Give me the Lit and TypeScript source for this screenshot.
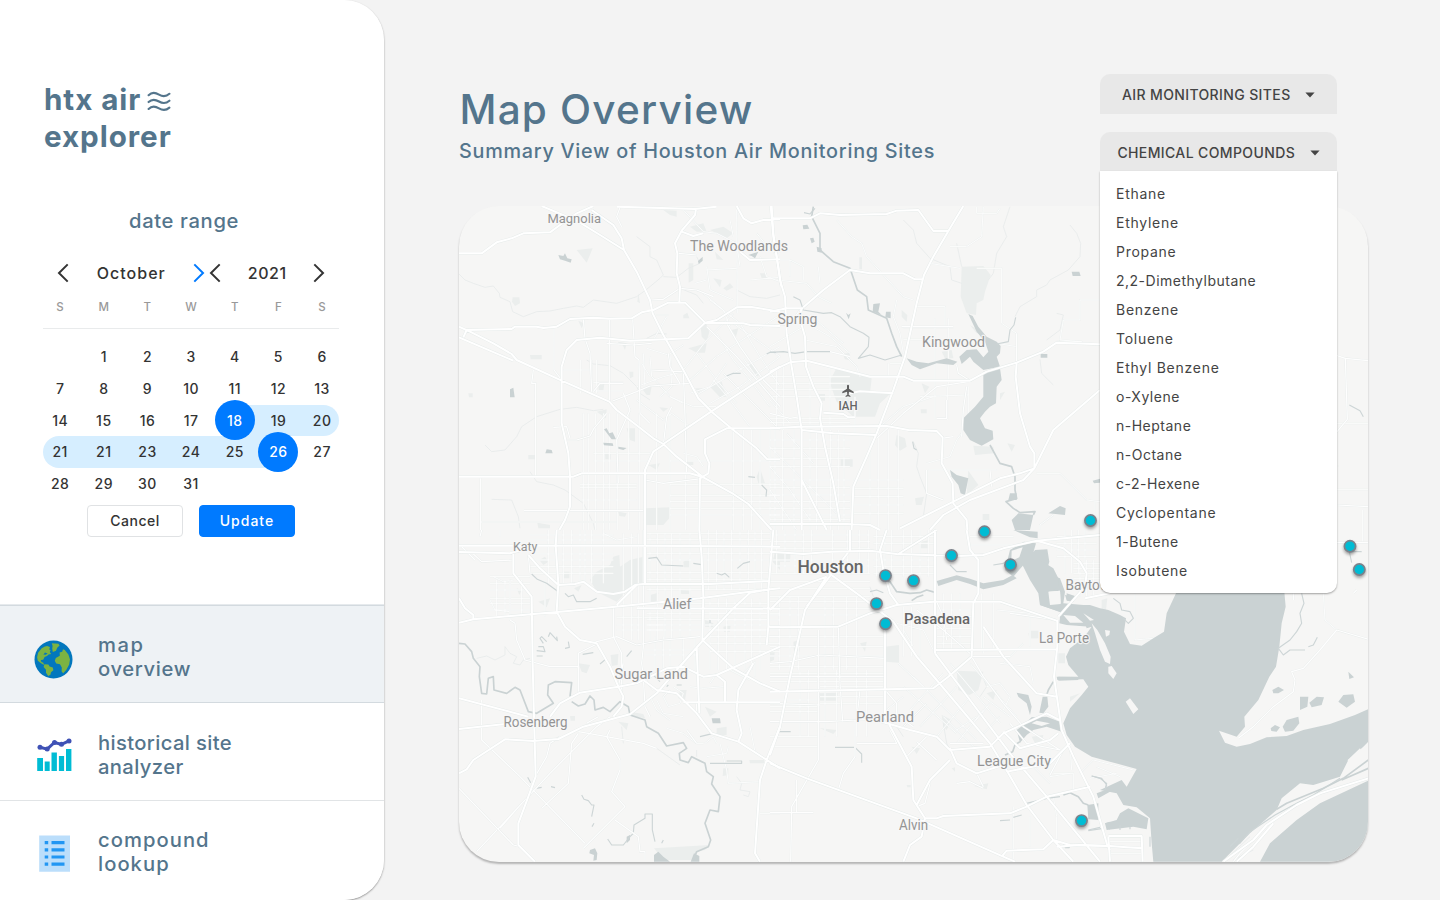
import { LitElement, html, svg, css } from "lit";
import { customElement } from "lit/decorators.js";
import { classMap } from "lit/directives/class-map.js";

/* ---------- map data: survey tiles, drawn at 3 units per pixel ---------- */

interface Tile {
  x: number;
  y: number;
  water?: string;
  land?: string;
  parks?: string;
  streams?: string;
  faint?: string;
  rivers?: string;
  local?: string;
  minor?: string;
  major?: string;
}

const v = (xs: number[], a: number, b: number) => xs.map((x) => `M${x} ${a}V${b}`).join("");
const h = (ys: number[], a: number, b: number) => ys.map((y) => `M${a} ${y}H${b}`).join("");

const tiles: Tile[] = [
  {
    x: 450,
    y: 200,
    water:
      "M325 165L340 168 345 160 352 175 365 178 362 188 345 182 330 178Z M744 183L758 170 758 182 746 192Z M180 568L190 563 194 592 180 592Z M286 760L290 748 305 750 308 760Z M462 688L470 685 478 700 488 697 498 718 485 718 475 705Z M460 728L488 730 490 738 462 736Z M505 740L530 744 520 750 505 746Z M895 165L925 155 915 175 905 168Z",
    parks:
      "M380 150L428 145 410 188Z M188 292H208L210 310 195 318 186 305Z M716 190H730V240L716 248Z M240 465H275V478H242Z M720 80L760 70 770 95 740 95Z M780 90L820 80 850 100 830 115Z M795 155L820 180 800 178Z M790 235L815 240 810 262Z M820 265L840 250 850 262 830 272Z M752 380L768 370 778 395 770 425 755 410Z M715 445L770 430 765 458 740 458Z M845 390L865 385 858 410Z M895 490L905 485 930 525 915 530Z M780 560L815 545 828 590 810 592Z M735 565L760 565 745 578Z M575 565L605 560 600 585 590 585Z M628 622L655 625 640 635Z M440 635L470 628 468 655Z M445 555L463 552 460 572 446 570Z M538 515H550V530L540 535Z M235 765H255V778H235Z M530 685H555V725L540 720Z M595 795L630 790 620 810Z M705 785H730V795H705Z M588 925L660 922 662 950 640 975 588 975Z M505 935L530 940 525 950 508 948Z M262 968L300 975 300 985 265 985Z M565 280L570 310 562 305Z M385 362L402 370 395 385Z M700 345L712 338 718 355 700 355Z M640 30L680 32 680 50 660 45Z M930 805L945 850 925 850 920 830Z M930 220H950V235H935Z M465 760H482V778H466Z M55 580H68V592H57Z M505 425L530 430 525 450 518 435 505 434Z",
    faint:
      "M27 222L45 240 70 250 105 262 130 258 148 280 150 292 180 305 188 335 220 350 260 335 300 333 340 325 380 318 400 322 430 300 500 310 560 290 590 268 630 235 640 225 620 180 600 170 600 140 560 110 M410 480L430 492 480 497 520 520 560 560 570 580 600 600 M105 735L125 755 165 750 200 710 215 680 260 650 330 628 380 622 430 632 460 628 M240 815L260 845 310 855 345 870 400 910 430 970 435 990 M125 898L185 900 205 950 210 985 M590 415L620 400 650 402 M640 230L680 232 715 205 750 190 740 170 M690 265L740 285 760 310 M860 270L900 290 950 295 990 285",
    streams: "M950 462L962 456 978 458 M830 528L850 520 872 520 M895 830L915 832 M935 855L950 870 948 890",
    local:
      v([400, 415, 437, 461, 478, 502, 536, 568, 620, 660, 707], 640, 990) +
      v([850, 880, 905, 930, 960], 690, 990) +
      h([783, 853, 886, 905, 925, 945], 660, 990) +
      h([548, 573], 430, 520) +
      v([392, 425, 440], 480, 580) +
      h([853, 862, 900], 390, 560) +
      h([510], 340, 425) +
      h([760, 783], 430, 600) +
      "M590 445L655 465 700 435M600 470L605 530 660 590 700 610M575 490L600 530M560 560L640 530 700 515M780 300L870 370 930 470 990 560M740 460L800 540 860 610M800 400L850 480 900 540 960 620M850 370L920 420 990 470M700 510L770 420 850 340M715 545L800 470 990 345M740 585L850 520 990 440M780 610L870 560 990 470M560 600L640 660 665 640 720 680M790 540L840 600 900 680M820 520L900 600 990 690M880 475L940 560 990 620M700 30L760 95 800 100 860 130 870 200M770 200L780 270 850 300M860 30L862 340M770 210L860 205M735 250L770 240M760 280L820 330 840 380M930 170L950 230 990 245M900 240L990 232M840 60L850 110M920 100L960 150 990 160M720 580L780 560 830 490M630 590L665 560 660 460M660 590L730 620 800 620M580 460L585 560M700 760L740 770 760 800M610 420L650 350",
    minor:
      "M222 932H580M92 966H500M92 835V990M250 510L245 550H257V830M312 385V510L335 540M400 357L405 415 420 460 425 575M478 360V605M548 355L555 470 567 480 570 640 600 670M352 720H380L420 708 432 685 470 640M520 580L540 630 500 720 505 850M488 603L560 575 600 558 720 550M605 430L550 435 470 430M655 460L660 500 690 550M310 682L350 680 360 715M600 300L640 298 690 265 740 270 790 290M510 22L500 50 515 80M600 510L700 515M430 575L450 550 520 550M640 735L650 650 665 620M700 510L705 650 710 820M770 380L860 470 990 620M830 370L870 440 940 540 990 590M360 830L380 828 395 820M620 345H655M585 840L640 850 760 835M685 160L740 165",
    major:
      "M27 380L60 395 130 430 185 462 200 480 335 542 478 605 500 630 555 672 610 715 640 732 680 770 760 832 850 882 895 912 965 990M27 412L190 482M275 18L380 62 455 108 522 150 560 215 600 300 608 340 640 405 700 510 745 595 790 640 850 690 920 745 952 778H990M430 18L380 40 330 75 300 97 220 100 185 115 140 127 95 160H27M425 30L490 75 515 115 522 150M328 990L345 960 360 920V830L355 760 335 670V500L350 450 380 420 450 413 540 422 650 418 715 415 765 368 800 360 860 322 900 320 990 335M40 412L50 390 185 387 195 380 260 380 280 384 320 380 360 357 430 353 480 356 545 355 575 337 610 330 655 308 705 308 765 368 880 370 900 375 990 378M962 18L970 110 985 200 994 260M860 18L880 55 905 70 940 60 990 57M500 20L735 27 800 20M738 27L735 45 695 92 675 130 682 160 680 220 690 260 688 308M695 95L730 108 760 100M870 155L900 180 990 178M990 685H830L765 718V760L778 790 775 820 750 835 748 990M640 732L780 637 990 500M27 830H370L395 820H720L760 832M640 735L610 755 585 810V990",
  },
  {
    x: 770,
    y: 200,
    water:
      "M595 342L608 348 625 380 650 410 680 425 692 438 690 460 680 470 690 500 640 510 610 485 600 470 575 492 568 470 590 450 620 448 640 472 655 455 645 425 620 395Z M640 515L690 505 695 540 680 560 678 610 660 620 645 635 630 655 645 685 668 692 670 718 635 737 600 720 580 690 580 655 615 620 640 590Z M410 475L440 485 475 490 530 475 562 485 550 495 500 490 450 508 425 495Z M540 810L560 825 595 835 585 885 572 880 565 855 545 830Z M725 960L745 940 790 945 780 990 735 990Z M835 940L870 918 887 925 885 945Z M905 215H928L932 228H908Z M812 462H832V473H812Z M968 842L990 836V848L972 850Z M228 338L235 345 242 340 236 358Z M98 76L112 74 118 86 100 88Z M310 312L330 310 325 335 335 345 308 335Z M348 335H362V355L346 352Z M120 115L130 113 134 125 125 130Z M140 140L155 145 155 158 142 155Z M720 880L740 880 740 900 715 900Z",
    parks:
      "M575 200L640 198 662 225 645 275 640 300 620 310 618 345 590 340 572 290Z M198 508L305 535 300 580 360 582 330 610 315 650 250 650 200 605 178 545Z M610 737L670 740 672 760 615 765Z M595 812L625 855 590 885Z M218 462L240 458 238 480 225 478Z M380 705L405 715 410 740 390 752 375 735Z M712 730L735 735 725 755Z M212 778H248V800H212Z M435 895L462 890 455 915 438 915Z M268 172H276V208H268Z M515 455L545 450 550 475 525 475Z M395 330L412 345 410 365 395 350Z M455 550L478 560 465 580Z M452 628H470V640H453Z M145 582H165V602H150Z M690 580L705 575 690 600Z M638 942H658V960H638Z M600 375L640 400 620 400Z",
    faint:
      "M400 60L430 90 440 130 480 175 540 200 545 240 575 250 M560 130L575 200 M720 20L700 80 710 110 680 160 670 220 655 240 M900 75L920 100 932 130 930 170 895 210 840 240 830 255 800 270 800 290 750 320 735 350 M810 478L815 520 850 555 M860 340L880 345 870 390 830 420 M430 725L445 760 440 800 450 830 470 880 460 950",
    streams:
      "M70 290L90 300 100 330 160 340 185 338 210 350 240 380 280 400 297 412 295 440 265 475 300 465 345 480 395 465M0 457L40 455 75 460 110 455 180 455M680 432L715 425 720 390 732 375 737 352M102 38L120 42 135 25M428 725L432 745 440 750",
    rivers:
      "M130 20L125 50 150 100 150 150 190 185 240 205 262 270 290 290 295 330 350 355 365 400 380 440 395 470M660 735L690 790 725 800 735 830 735 870 740 895 708 905 730 925 750 938 795 935 790 945",
    local:
      h([530, 550, 568, 590, 655, 668, 720, 745, 775, 800, 840, 862, 885, 905, 925, 945, 958], 0, 240) +
      v([15, 38, 72, 120, 140, 182, 205, 222, 300, 325, 355, 385], 690, 990) +
      v([20, 40, 120, 180], 500, 690) +
      h([840, 865, 890, 915, 940], 250, 400) +
      v([495, 535], 355, 560) +
      h([382], 400, 550) +
      h([418], 400, 500) +
      h([810], 475, 680) +
      v([495, 532, 595], 560, 660) +
      "M0 740L100 840 200 940M50 700L130 790M0 600L60 670M0 800L60 870 120 960M0 870L80 990M440 320H525V380M450 590L595 585M330 680L400 620 490 590M355 490V535M360 490H400M470 790L540 770 560 720 575 700M200 60L245 110 275 130 290 170 400 290 430 300M540 140H590L635 110 640 20M480 190L570 205M620 205H695V370L740 400M680 430L740 440M0 180H60V230M20 240L110 250 145 290 185 310M145 200L150 250M60 180L100 200V240M0 440L50 410 100 380M110 370L180 410 240 460M120 345L220 430M105 420L200 440 260 500 270 530M380 300L370 350 390 400 400 460M0 120L20 180M620 20V40H680L690 25M860 425H935L870 420 880 360H930V300H990M800 820H870L950 900 990 905M850 945L810 975V990M975 905V960",
    minor:
      "M740 400V488M395 380L550 380M160 640L220 640 230 650H255V700M255 590V650M500 655H530V600M180 455L240 470M0 377L60 372 90 330M590 560L580 630 575 710 M560 495L565 520 600 542M660 810L665 860M0 640L60 655 90 650M320 715L400 640 500 560 595 545M470 810V880L520 900M550 710L515 715",
    major:
      "M5 18L10 100 30 240 45 290 50 400 65 500 80 590 95 690V990M95 325L88 350 105 410 108 500 130 560 155 610 150 655 165 740 190 850 210 965M580 18L540 85 490 170 462 225 440 310 405 470 370 570 320 700 290 770 250 860 245 990M0 685L90 680 350 678 415 690 500 693 518 712 515 790 548 850 550 910 590 960 592 990M0 515L60 487 110 482 200 505 300 530H400L430 542H600L650 515 740 488 820 455 860 428 990 433M8 55H120L150 40 210 45 350 42 380 32 445 30 490 93H535M100 322L160 270 240 210 300 220H400L435 238H460M390 985L550 905 690 835 750 820 793 805 850 690 990 570M480 990L520 945 600 900 760 840 793 805M740 488L737 530 750 640 780 740 793 760V805M160 638L220 642 235 652H255M240 580L270 574 370 580M0 335L50 325H100M0 972H230L300 975 330 990M95 690L190 700 320 705M95 840L170 990",
  },
  {
    x: 450,
    y: 530,
    water:
      "M420 960L435 955 442 970 440 990 430 992 432 975 418 970Z M612 975L625 965 640 980 660 995H612Z M722 995L732 970 748 978 748 995Z M785 565L810 565 812 580 788 580Z M530 920L540 915 540 930 530 940Z",
    parks:
      "M420 150L440 125 480 105 490 80 508 75 510 110 540 90 580 80V155L530 185 500 215 440 185Z M372 175L395 165 385 185Z M268 90L285 80 295 95 280 105Z M338 125H358V145H340Z M612 955L780 945 765 960 740 965 725 990H640Z M800 595L830 590 830 615 800 618Z M700 95L720 85 718 112 702 112Z M975 65H990V120L968 95Z M385 400L420 405 410 430 395 425Z M482 375L505 372 503 405 485 408Z M200 175L215 180 208 195Z M265 215L300 205 290 232Z M765 530L800 545 780 560Z M820 715H835V735L818 738Z M505 575L535 580 530 600Z M690 480L710 480 705 510 685 505Z M898 690H942V700H900Z M765 270L790 280 790 292 765 290Z M820 290L842 285 840 305H822Z M360 558H375V572H362Z M600 195L625 188 620 215 600 215Z M690 180L720 182 718 192H694Z M540 545L580 552 585 565 545 558Z",
    faint:
      "M80 385L110 378 135 390 165 375 165 350 180 370 200 380 190 400 210 405 220 390 240 385 M515 590L520 640 M620 655L690 705 M860 740L875 760 870 780 900 785 895 800 880 795 M740 660V680",
    streams:
      "M245 132L262 148 290 160 325 185M345 190L355 200 370 195 380 215 420 215 440 205M265 350L280 350 285 365 260 362M280 340L270 325 275 320 290 335M295 320L300 308 322 332 320 320M345 355L358 352 355 335M260 378H278M398 373L430 368M450 402L470 385M530 380L545 362M595 85L620 82 635 105 700 108M730 100L755 104M800 130L815 135 825 130 838 142M862 115L880 100 900 95M258 775L275 772M303 770L315 773M395 795L402 808 415 812 425 825 432 825 425 860M233 742L242 758M473 927L485 945 520 945 540 920 550 910 552 885 585 865 585 852H607V900L615 935M680 465H695M610 435L630 455M650 470L655 465M750 620L790 610M780 700H875V693H830M780 280V270M426 890L432 880M635 940L640 930",
    rivers:
      "M27 340L45 342 65 365 70 385 90 410 88 440 95 490 110 492 115 445 130 440 132 480 170 490 195 472 210 480 235 545 260 550 310 520 293 495 295 465 315 455 365 458 360 500M365 515L385 528 405 522 420 498 432 510 435 540 460 532 480 545 510 515 535 530 540 555 585 570 590 590 625 610 650 648 700 638 710 655 688 670 690 690 715 698 725 680 765 700 770 725 790 740 785 762 810 800 805 845 780 840 765 880 782 930 775 950 740 965 730 990",
    local:
      v([295, 340, 365, 390, 405, 425, 460], 0, 160) +
      h([15, 30, 72, 90, 110, 130], 240, 490) +
      v([520, 545, 565, 600, 622, 645, 665, 690, 720], 10, 330) +
      h([10, 28, 70, 90, 128, 148, 178, 220, 250, 268, 285, 300], 590, 960) +
      v([775, 800, 822, 845, 870, 895, 915, 935], 0, 180) +
      v([780, 805, 830, 855, 885, 905, 930], 205, 420) +
      h([250, 270, 300, 320, 340, 365], 780, 990) +
      h([262, 285, 300], 500, 640) +
      h([140, 160, 180, 205, 220, 240], 120, 240) +
      v([140, 165, 215, 285], 150, 260) +
      h([360, 375], 585, 750) +
      v([615, 640, 660, 700, 735], 320, 420) +
      "M120 210L135 240 180 245M130 140L160 155 190 150M660 480L640 500 655 530 690 520 700 490 670 470M620 510L640 550 700 560M600 500L620 540 660 570M720 470L760 475 820 470M780 460L800 430M840 420L900 450M880 430L915 395V440M765 640L790 620 800 640M770 680L830 670 835 650M810 640L830 720 835 760 930 755M650 595L700 610 740 640 760 640M900 590L915 665M930 850H990M460 10L500 30 560 20",
    minor:
      "M150 0V20M70 72L95 95 190 90M180 150V270L195 280 200 330 225 390 300 410H385V485M235 75L240 130M95 510V630L210 740 405 940M27 775L190 945 210 950M80 965L300 730 440 590 480 560M150 895L215 820M275 835L355 760 365 640 385 610M255 740L290 680 300 640 330 620M385 605L470 620 580 640 620 655M410 580L445 560M480 600L470 620 510 690 510 720 485 785 525 830 400 955M495 870L565 920 570 965 585 965V990M740 517V550M580 0V350L575 400 580 440 610 480M490 230V320L515 370V490M580 440L585 530 600 560M505 470L520 400M640 330L700 325 750 320M420 340L500 320 560 345 640 330M710 600L740 640M30 45L75 90M320 47L380 45M445 340L385 370V415M95 0L90 20",
    major:
      "M27 47L580 47 990 50M27 66L180 70 235 55M190 72V130L245 200 248 400 252 560 257 740 235 800 205 880V945L255 995M320 0L317 47 325 160 320 245 345 290 390 330 440 340 480 410 505 470 520 500 515 530 490 560M27 278L70 268 330 245 480 232 750 205 900 185 960 178 990 175M27 205L45 235 70 255V268M235 75L270 115 325 165 375 162 400 155 440 185 490 192 525 185 555 165 580 162H780L955 153M27 730L50 718 70 690 165 628 250 633 325 627 400 590 500 563 540 553 620 490 680 420 760 330 850 235 900 188 960 178M748 0L755 80 760 200 757 330 850 415 930 460 990 485M970 0L965 60 955 180 955 290 950 345M27 505L235 560M27 597L200 578M300 560L330 520 390 488 505 470 560 460 650 415 700 410 760 440 800 435 990 350M580 450L620 480 680 490 740 550 785 610 865 635 990 715M865 635L875 610 860 540 865 480 910 400M700 517H990M990 590L950 690 930 750 915 970 930 995M585 0V162M740 350L748 550M800 435L825 455V515M560 235L990 236M955 290H990M500 225L560 165",
  },
  {
    x: 770,
    y: 530,
    water:
      "M730 0L803 5 803 25 780 22Z M765 100L795 60 832 58 838 95 828 130 870 145 885 185 880 220 940 225 1020 245V300L960 290 890 285 868 280 870 262 880 250 810 225 808 180 840 178 800 150 775 130Z M500 153L560 136 600 146 640 160 700 150 728 135 740 145 700 165 640 178 600 162 560 150 505 168Z M740 600L760 585 785 562 830 560 870 575 875 605 830 590 790 600 770 615 750 638Z M952 825L985 820 985 870 955 868Z M880 942L902 948 898 955 885 955Z M818 500L832 500 835 530 820 550 808 548Z M740 488L775 495 785 530 780 555 770 520 745 500Z M1005 880L1020 875V900Z M980 790L1020 775V785L985 805Z M885 195L915 200 905 215 890 210Z M865 440L925 441V450L865 452Z M720 60L762 35 798 40 785 85 765 100 730 140 705 120Z",
    land: "M835 185L870 182 872 222 840 225Z M725 62L758 52 748 82 724 92Z M785 580L800 572 840 580 815 588Z",
    parks:
      "M345 350L387 345V398L345 395Z M560 422L640 425 625 480 598 495 565 480Z M148 490L205 488 200 512H150Z M70 335L90 330 88 365 72 362Z M20 70L62 65 60 95 25 95Z M515 555L545 570 530 600 520 590Z M425 650L450 655 440 672Z M612 768L655 760 650 778Z M150 595L200 600 190 612Z M650 490L680 480 670 510Z M270 340L290 335 285 365Z M775 310H800V325H778Z M785 620L820 615 815 640 795 640Z M0 360L15 355 12 390 0 395Z M410 765H422V772H412Z M545 715L555 712 555 725Z M455 35L478 30 475 55 450 55Z M865 370H885V400H865Z",
    faint:
      "M520 580L530 640 545 670 M630 420L650 470 630 500 M380 590L400 620 M300 170L310 200",
    streams:
      "M28 605H62M195 652H255L275 672V698M770 820L830 805 870 800M540 105L560 125 590 125M670 105L700 100 710 92M720 870L690 872M730 862L755 855M955 902L1000 895M965 738L995 745 1010 765 1005 778M300 185L320 180 340 188",
    rivers:
      "M340 150L360 155 380 185 420 190 450 188 470 180 495 187M425 212L440 202 460 195M505 160L560 143 600 152 640 170 700 158 730 140M880 795L900 788 925 800 940 820 955 825M830 495L835 480 850 455M750 635L735 645 728 665 705 675",
    local:
      v([20, 45, 75, 100, 125, 188, 232, 268, 295], 0, 130) +
      h([15, 35, 55, 90, 108, 130, 155, 175, 200, 215, 235, 255], 0, 300) +
      v([28, 60, 85, 165, 190, 230, 260], 200, 420) +
      h([320, 350, 378, 410, 430, 455], 0, 340) +
      v([90, 115, 165, 200, 260, 290], 420, 620) +
      v([320, 345, 365, 400, 425, 450, 475], 0, 140) +
      h([20, 40, 90, 110, 130], 310, 495) +
      v([520, 545, 570, 635, 670], 190, 360) +
      h([240, 260, 295, 320, 340], 500, 605) +
      h([20, 45], 600, 730) +
      v([400, 425, 450], 230, 380) +
      h([510, 530, 545, 620, 650], 0, 145) +
      v([885, 905, 925, 945], 0, 130) +
      h([20, 40, 60, 80], 860, 980) +
      h([470, 500, 520], 150, 340) +
      "M400 470L560 610M430 440L620 630M520 430L420 540M560 470L450 590M600 500L500 620M640 540L560 640M540 400L690 580M600 400L740 560M650 470L690 460 720 500 700 540M640 500L720 560M385 400L460 470M400 590L470 520M350 540L400 500M520 560L620 660M700 400L760 340M640 370V300M690 400L780 410 790 460M680 240L780 250V350M560 600L620 560M660 520L610 580M690 560L640 610M380 280L460 300 490 360M400 300L430 350M840 740L900 730M780 700L840 760M840 640V740M900 640L905 720M730 830V990M780 860V950M850 800L860 860V930",
    minor:
      "M205 290L210 460 218 575M145 300V690L65 830 62 995M0 575H170L260 570 310 568M0 848H130M80 750V850M255 572V680L220 730 205 780M260 640H380L360 600M440 635L500 690M410 680L470 620M380 555L430 590M0 400L60 395 150 375 345 385M0 440H345M480 760L465 820 440 830M560 760L600 755 640 775M620 730L640 770M540 640H640M345 400V560M440 240L520 300 600 370M720 250L860 270M605 380L640 440 700 520 760 590 870 660M600 370L610 380H720M870 660L770 640 720 580M840 735L880 660M0 520L150 525M260 570L270 480M345 480L380 520 380 555M640 290L680 350M495 205L520 260 530 330",
    major:
      "M0 65L100 72 185 65 300 62 380 72 560 78 640 75 700 55 800 32 990 15M800 32L880 55 930 95 950 130 945 170 865 260M170 140L105 240 60 440 30 590 0 675M150 110L260 190 370 275 440 380 500 450 660 640 715 730 770 825 850 930 910 995M0 292L205 290 300 250 380 225 490 215H690L860 272M385 225L360 190 340 120 330 60 350 0M590 0L600 60 625 90V190L610 220 605 380 535 440 490 475 0 485M495 0V370M495 360L860 358M862 270V350L852 440 875 600 910 680 970 800 1010 940 1020 960M345 300V560L425 710 430 810 465 865 455 920 420 945 400 995M0 700L110 745 440 865 700 980 735 995M465 865H500L520 858 720 850 770 830 830 800 960 770M310 568L420 600 500 620 540 660 660 650 700 610 830 550 868 570M540 655L560 700 620 730 700 705 M710 725L840 700 900 640M540 690L480 750 440 825M495 370L600 510 720 670 830 800 990 995M850 930L900 945 1020 948M695 980L710 962 820 958 850 930M640 290L700 380 800 490 860 500M865 610L840 630 750 655 700 605M110 230L240 60V0M385 72L500 0M0 240L60 180 170 140M945 205L1020 190",
  },
  {
    x: 1020,
    y: 560,
    water:
      "M470 95L440 160 432 215 400 235 365 257 330 252 312 215 318 175 300 165 265 150 240 145 210 135 155 135 125 160 135 175 190 175 200 205 215 200 190 235 150 265 138 290 145 315 175 350 110 350 112 360 190 358 205 380 185 405 150 445 130 490 140 525 165 560 215 590 270 605 350 627 320 680 305 660 240 690 290 700 310 735 350 742 390 775 395 850 400 905H605L690 820 770 750 785 715 840 670 880 675 960 650 985 600 1030 560 1045 545V447L1005 465 930 492 850 510 800 528 740 532 690 552 650 560 615 548 597 512 650 530 675 500 673 470 715 420 748 350 768 320 778 260 785 190 797 140 793 95Z M720 905L750 850 830 780 900 730 1045 662V905Z M840 410L865 410 862 440 840 450Z M868 428L890 410 912 412 905 435 875 442Z M955 425L970 405 1000 403 1005 425 980 443Z M788 500L800 480 835 470 838 490 820 512 795 515Z M752 505L765 495 780 502 770 515 754 513Z M985 335L1002 352 988 357Z M757 390L775 380 792 390 775 400 760 400Z M255 790L290 780 300 760 325 745 385 775 380 808 340 800 260 810Z M0 0H60L100 25 115 55 115 80 100 90 85 95 80 125 120 155 60 135 55 100 30 60Z M140 100L165 108 160 125 140 122Z M118 165L130 190 195 198 180 180Z",
    land:
      "M215 190L232 210 255 250 272 290 270 312 255 305 240 270 225 220Z M265 320L275 318 290 340 280 357 265 340Z M317 425L330 415 355 448 340 462Z M87 95L120 92 122 130 92 132Z M190 160L222 180 210 182Z M255 210L270 212 268 225 258 230Z M130 165L165 168 190 188 150 188Z M983 600L1020 565 1035 590 990 632Z",
    parks: "M28 212H55V235H28Z M245 120L262 115 258 150 245 150Z M150 410L180 400 150 425Z",
    faint: "M610 905L690 830 M700 870L640 900",
    streams:
      "M845 100L852 130 840 160 845 190 830 215 810 240 775 265 790 285 810 270 855 270M865 260L880 255 892 232M280 115L300 130 305 150 330 155 340 175 325 190 310 175M215 648L240 655 260 670 255 690M205 810L240 802M630 860L655 835M658 852L690 815 765 765M765 765L830 730 880 705 960 655M390 830V860M300 810V795M330 808V800",
    rivers: "M770 748L800 730 910 685 970 655 1045 600M965 660L1045 625",
    local:
      h([10, 25, 40, 55], 160, 240) +
      v([180, 200, 220], 0, 110) +
      "M345 100V240L400 235M270 830H365V905M270 845H365M270 880H365M290 640L210 655M180 640L220 600 340 630M910 100L915 180 950 210M10 0L40 20M230 620L300 650M100 640L160 640V690",
    minor:
      "M950 210L1045 238M950 210L900 270 850 325 815 335 825 360 820 395 760 440 700 500 655 535M690 850L660 880 640 905M820 100V120M1000 100L1010 90",
    major: "M610 905L700 840 740 795 830 735 900 700 1045 655M650 905L700 860 760 790M265 828H365L368 905M110 860L180 855 270 858 320 862 368 865M265 830L270 905",
  },
  {
    x: 1300,
    y: 320,
    streams: "M148 255L180 272 190 290M150 695H185M148 695L155 728",
    local: "M110 508H205M188 570V665M110 310H205",
    minor: "M110 555L205 560M110 668H205M90 360L142 298 136 115 90 100M136 115L205 122M90 438H115",
  },
];

const tileLayer = (cls: string, pick: (t: Tile) => string | undefined) =>
  svg`<g class=${cls}>${tiles.map((t) =>
    pick(t) ? svg`<path transform=${`translate(${t.x} ${t.y}) scale(.33333)`} d=${pick(t)!}></path>` : null,
  )}</g>`;

/* name, left edge, baseline, width, size, tone */
const places: [string, number, number, number, number, string][] = [
  ["Magnolia", 547.5, 223, 53.5, 13.5, "town"],
  ["The Woodlands", 690, 251, 98, 14.5, "town"],
  ["Spring", 777.5, 323.5, 40, 14, "town"],
  ["Kingwood", 922, 347, 63, 14.5, "town"],
  ["IAH", 838.5, 410, 19, 12, "code"],
  ["Katy", 513, 550.5, 24.5, 13.2, "town"],
  ["Alief", 663, 608.5, 28.5, 14, "town"],
  ["Houston", 797.5, 573, 66, 18.3, "city"],
  ["Pasadena", 904, 624.3, 66, 15.4, "city"],
  ["Baytown", 1065.5, 589.5, 52, 14, "town"],
  ["La Porte", 1039, 643.3, 50, 14, "town"],
  ["Sugar Land", 614.5, 679, 73.5, 14.4, "town"],
  ["Rosenberg", 503.5, 727, 64, 14, "town"],
  ["Pearland", 856, 722, 58, 14.2, "town"],
  ["League City", 977, 765.8, 74, 14.6, "town"],
  ["Alvin", 899, 829.8, 29, 14, "town"],
];

const sites: [number, number][] = [
  [1090.5, 520.5], [984.5, 531.7], [951.5, 555.5], [1010.5, 564.7], [885.5, 575.6], [913.5, 580.6],
  [876.5, 603.6], [885.5, 623.7], [1081.5, 820.6], [1350, 546.2], [1359.3, 569.5],
];

const compounds = [
  "Ethane", "Ethylene", "Propane", "2,2-Dimethylbutane", "Benzene", "Toluene", "Ethyl Benzene",
  "o-Xylene", "n-Heptane", "n-Octane", "c-2-Hexene", "Cyclopentane", "1-Butene", "Isobutene",
];

const weeks: (number | null)[][] = [
  [null, 1, 2, 3, 4, 5, 6],
  [7, 8, 9, 10, 11, 12, 13],
  [14, 15, 16, 17, 18, 19, 20],
  [21, 21, 23, 24, 25, 26, 27],
  [28, 29, 30, 31, null, null, null],
];

@customElement("site-map")
export class SiteMap extends LitElement {
  static styles = css`
    :host { display: block; border-radius: 40px; overflow: hidden; background: #f6f6f5; }
    svg { display: block; width: 100%; height: 100%; }
    path { fill: none; stroke-linejoin: round; }
    .water path { fill: #cad2d3; }
    .land path { fill: #f6f6f5; }
    .parks path { fill: #ebeeed; }
    .faint path { stroke: #e7ebeb; stroke-width: 2.5; }
    .streams path { stroke: #cdd5d6; stroke-width: 3.4; }
    .rivers path { stroke: #cad2d3; stroke-width: 5; }
    .local-edge path { stroke: #ebefee; stroke-width: 4.8; }
    .local path { stroke: #fdfdfd; stroke-width: 2.8; }
    .minor-edge path { stroke: #e8eceb; stroke-width: 5.8; }
    .minor path { stroke: #fefefe; stroke-width: 3.6; }
    .major-edge path { stroke: #e6ebea; stroke-width: 8.4; }
    .major path { stroke: #fff; stroke-width: 6; }
    text {
      font-family: Roboto, "Open Sans", sans-serif;
      paint-order: stroke;
      stroke: rgba(248, 248, 248, 0.85);
      stroke-width: 2.4px;
      stroke-linejoin: round;
    }
    .town { fill: #949494; }
    .city { fill: #666; font-weight: 500; }
    .code { fill: #666; font-weight: 500; }
    .plane { fill: #5e5e5e; }
    .pin { fill: #00bcd4; stroke: #7b828b; stroke-width: 1.7; filter: drop-shadow(0 2px 1.5px rgba(0, 0, 0, 0.35)); }
  `;

  render() {
    return html`<svg viewBox="459 206 909 656" preserveAspectRatio="none">
      ${tileLayer("parks", (t) => t.parks)}
      ${tileLayer("faint", (t) => t.faint)}
      ${tileLayer("local-edge", (t) => t.local)}
      ${tileLayer("local", (t) => t.local)}
      ${tileLayer("water", (t) => t.water)}
      ${tileLayer("land", (t) => t.land)}
      ${tileLayer("streams", (t) => t.streams)}
      ${tileLayer("rivers", (t) => t.rivers)}
      ${tileLayer("minor-edge", (t) => t.minor)}
      ${tileLayer("minor", (t) => t.minor)}
      ${tileLayer("major-edge", (t) => t.major)}
      ${tileLayer("major", (t) => t.major)}
      <path
        class="plane"
        d="M847 385.600q1-1.800 2 0v3.200l4.700 3v1.400l-4.700-1.400-.3 2.900 1.700 1.200v1l-2.400-.6-2.400.6v-1l1.700-1.200-.3-2.900-4.700 1.400v-1.400l4.700-3z"
      ></path>
      ${places.map(
        ([name, x, y, w, size, tone]) =>
          svg`<text class=${tone} x=${x} y=${y} font-size=${size} textLength=${w} lengthAdjust="spacingAndGlyphs">${name}</text>`,
      )}
      ${sites.map(([x, y]) => svg`<circle class="pin" cx=${x} cy=${y} r="5.6"></circle>`)}
    </svg>`;
  }
}

@customElement("date-range")
export class DateRange extends LitElement {
  static styles = css`
    :host { display: block; color: #333; font-weight: 500; }
    .pickers { display: flex; height: 24px; align-items: center; padding: 0 59px 0 57px; font-size: 16px; }
    .month, .year { display: flex; align-items: center; justify-content: space-between; }
    .month { width: 148px; margin-right: 4px; letter-spacing: 1px; }
    .month span, .year span { text-indent: 0.5px; }
    .year { flex: 1; letter-spacing: 0.6px; }
    .chev { width: 12px; height: 20px; fill: none; stroke: #333; stroke-width: 2; }
    .chev.on { stroke: #007aff; }
    .names, .week { display: grid; grid-template-columns: repeat(7, 43.67px); padding-left: 38.2px; text-align: center; }
    .names { margin-top: 12px; line-height: 20px; font-size: 11.5px; color: #999; padding-bottom: 11px; }
    .rule { height: 1px; margin: 0 45px 0 43px; background: #e9ebec; }
    .weeks { padding-top: 12px; }
    .week { height: 31.75px; grid-template-rows: 31.75px; line-height: 32.4px; font-size: 14px; letter-spacing: 0.5px; text-indent: 0.3px; }
    .day { position: relative; z-index: 0; }
    .day::before { content: ""; position: absolute; z-index: -2; inset: 0; }
    .in::before { background: #d6eeff; }
    .from::before { left: 50%; }
    .to::before { right: 50%; }
    .edge-r::before { right: 4.8px; border-radius: 0 16px 16px 0; }
    .edge-l::before { left: 5px; border-radius: 16px 0 0 16px; }
    .pick { color: #fff; z-index: 1; }
    .pick::after {
      content: ""; position: absolute; z-index: -1; width: 40px; height: 40px; border-radius: 50%;
      left: calc(50% - 20px); top: calc(50% - 20px); background: #007aff;
    }
    .actions { display: flex; gap: 16px; padding: 5px 0 0 87px; }
    button {
      box-sizing: border-box; width: 96px; height: 32px; padding: 0; border: 1px solid #e0e2e4; border-radius: 4px;
      background: #fff; color: #333; font: 500 14px Inter, sans-serif; letter-spacing: 0.5px;
    }
    .primary { border-color: #007aff; background: #007aff; color: #fff; letter-spacing: 1px; }
  `;

  private chevron(dir: "l" | "r", on = false) {
    return html`<svg class=${classMap({ chev: true, on })} viewBox="0 0 12 20">
      <path d=${dir === "l" ? "M10.7 1.4L2 10l8.7 8.6" : "M1.3 1.4L10 10l-8.7 8.6"}></path>
    </svg>`;
  }

  render() {
    return html`
      <div class="pickers">
        <div class="month">${this.chevron("l")}<span>October</span>${this.chevron("r", true)}</div>
        <div class="year">${this.chevron("l")}<span>2021</span>${this.chevron("r")}</div>
      </div>
      <div class="names">${[..."SMTWTFS"].map((d) => html`<span>${d}</span>`)}</div>
      <div class="rule"></div>
      <div class="weeks">
        ${weeks.map(
          (week) => html`<div class="week">
            ${week.map((d, i) => {
              const cls = {
                day: true,
                in: d !== null && d >= 18 && d <= 26,
                from: d === 18,
                to: d === 26,
                pick: d === 18 || d === 26,
                "edge-l": i === 0,
                "edge-r": i === 6,
              };
              return html`<span class=${classMap(cls)}>${d ?? ""}</span>`;
            })}
          </div>`,
        )}
      </div>
      <div class="actions"><button>Cancel</button><button class="primary">Update</button></div>
    `;
  }
}

@customElement("app-root")
export class AppRoot extends LitElement {
  static styles = css`
    :host {
      display: flex; width: 1440px; height: 900px; overflow: hidden; background: #f3f3f3;
      font-family: Inter, "Open Sans", sans-serif; color: #54758c; white-space: nowrap;
    }
    aside {
      box-sizing: border-box; flex: none; display: flex; flex-direction: column; width: 384px; height: 900px; overflow: hidden;
      padding-top: 81px; border-radius: 0 40px 40px 0; background: #fff;
    }
    .rail { flex: none; border-radius: 0 40px 40px 0; box-shadow: 0 1px 2px rgba(0, 0, 0, 0.4); }
    .logo { height: 74px; padding-left: 44px; font-size: 29.6px; font-weight: 700; line-height: 37px; letter-spacing: 0.95px; }
    .logo svg { width: 24px; height: 20px; margin-left: 6px; vertical-align: -1px; fill: none; stroke: currentColor; stroke-width: 2.1; stroke-linecap: round; }
    .caption { margin: 54px 0 0; padding-left: 129px; font-size: 20.2px; font-weight: 500; line-height: 24px; letter-spacing: 0.65px; }
    date-range { margin-top: 28px; }
    nav { margin-top: 67px; border-top: 1px solid #e6eaed; font-size: 20.2px; font-weight: 500; line-height: 24px; }
    .item { box-sizing: border-box; display: flex; height: 98px; padding: 28px 0 0 34px; border-top: 1px solid #e1e4e6; }
    .item.active { height: 97px; background: #eef2f5; border-top-color: #d3dadf; padding-top: 27px; }
    .item.active + .item { border-top-color: #d3dadf; }
    .item:last-child { padding-top: 27px; }
    .item svg { flex: none; width: 40px; height: 48px; margin-right: 24px; }
    .item span { display: block; letter-spacing: 0.65px; }
    .item .snug { letter-spacing: 0.38px; }
    .item .loose { letter-spacing: 1.05px; }
    .item .wide { letter-spacing: 1.6px; }
    .sea { fill: #0277bd; }
    .continent { fill: #7cb342; }
    .bar { fill: #00bcd4; }
    .trend { fill: none; stroke: #3f51b5; stroke-width: 3; }
    .dot { fill: #3f51b5; }
    .sheet { fill: #bbdefb; }
    .entry { fill: #2196f3; }
    main { box-sizing: border-box; flex: 1; padding: 0 72px 0 75px; }
    header { display: flex; justify-content: space-between; height: 206px; padding-right: 31px; }
    h1 { margin: 0; padding-top: 86px; font-size: 40.5px; font-weight: 500; line-height: 48px; letter-spacing: 1.2px; text-indent: 0.5px; }
    h2 { margin: 0; padding-top: 5px; font-size: 19.8px; font-weight: 500; line-height: 24px; letter-spacing: 0.74px; }
    .filters { width: 237px; padding-top: 74px; color: #444; }
    .select { position: relative; margin-bottom: 18px; }
    .head {
      box-sizing: border-box; display: flex; align-items: center; justify-content: center; gap: 14.5px; height: 40px; padding-top: 1px;
      border-radius: 10px 10px 0 0; background: #e8e8e8; font-size: 14px; font-weight: 500; line-height: 17px; letter-spacing: 0.38px;
    }
    .head svg { width: 10px; height: 6px; fill: #444; }
    .head.open { height: 39px; padding-top: 2px; }
    .menu {
      position: absolute; z-index: 1; left: 0; right: 0; top: 39px; margin: 0; padding: 8px 0; list-style: none; background: #fff;
      border-radius: 0 0 10px 10px; box-shadow: 0 1px 2px rgba(0, 0, 0, 0.35); font-size: 14px; letter-spacing: 0.73px; line-height: 29px;
    }
    .menu li { padding-left: 16px; }
    .menu .prefixed { letter-spacing: 0.5px; }
    site-map { width: 909px; height: 656px; box-shadow: 0 2px 2px rgba(0, 0, 0, 0.26); }
  `;

  private caret() {
    return html`<svg viewBox="0 0 10 6"><path d="M.4.4h9.2L5 5.6z"></path></svg>`;
  }

  private globe() {
    return html`<svg viewBox="0 0 40 48">
      <circle class="sea" cx="19.5" cy="26.5" r="19"></circle>
      <path
        class="continent"
        d="M17.800 10.200l6.600.6 1.200 1.600-2.400 2.400-1.200 3-3.200 1.200-.6-3.400.4-2.600zM13.200 13l2.800.9-.8 2.600 1.400.6-.8 1.800 1.400 2-2.600.6-1.600 1.600-2.400 1-1.400 2.600-2.400.4.6 2 2 .6.6 2.200-3-1.600-3.200-2.600-.7-3.400 1-4.600 3.600-4.400 3.200-1.800zM11 19.600l-1.600 1.800 2.400.4 1.800-1.200zM29 16.200l1.800.8 3.600 4.400 1.600 5-.8 5.200-3 5.400-3 3.200-1.600-1.800.2-4-1.800-3.200-3.800-.6-1.400-2.800 1-2.800 4-2.200-.2-3.400 2.600-.6zM10.400 31.200l4 .2 1.200 2.200 3.200 1 .6 2.600-2.400 2-.6 2.600-2.200 1.200-2.200-3.200v-3l-2.400-2.800z"
      ></path>
    </svg>`;
  }

  private chart() {
    return html`<svg viewBox="0 0 40 48">
      <path class="bar" d="M3.200 27H9V40H3.200zM10.700 30.400h5V40h-5zM17.500 21.500h5.400V40h-5.400zM24.900 24.900h5.200V40h-5.200zM32 17.900h5.400V40H32z"></path>
      <path class="trend" d="M6 16.200l7.200 1.900 7.300-6.600 7 1.900L35 9.900"></path>
      <g class="dot">
        <circle cx="6" cy="16.200" r="2.500"></circle><circle cx="13.200" cy="17.900" r="2.500"></circle>
        <circle cx="20.500" cy="11.600" r="2.500"></circle><circle cx="27.500" cy="13.200" r="2.500"></circle>
        <circle cx="35" cy="9.900" r="2.500"></circle>
      </g>
    </svg>`;
  }

  private sheet() {
    return html`<svg viewBox="0 0 40 48">
      <path class="sheet" d="M5.200 7.500H36v36.200H5.200z"></path>
      <path
        class="entry"
        d="M10.700 13h3.500v3.200h-3.500zM17.500 13h13v3.200h-13zM10.700 20.200h3.500v3.200h-3.500zM17.500 20.200h13v3.200h-13zM10.700 27.400h3.500v3.200h-3.500zM17.500 27.400h13v3.200h-13zM10.700 34.600h3.500v3.200h-3.500zM17.500 34.600h13v3.200h-13z"
      ></path>
    </svg>`;
  }

  render() {
    return html`
      <div class="rail">
        <aside>
          <div class="logo">
            <div>htx air<svg viewBox="0 0 24 20">
              <path d="M1.600 4.200c3.400-3.400 6.400-3 10.400-.6s6.800 2.400 10.400-.8M1.600 11.100c3.400-3.400 6.400-3 10.400-.6s6.800 2.400 10.400-.8M1.600 18c3.400-3.400 6.400-3 10.400-.6s6.800 2.400 10.400-.8"></path>
            </svg></div>
            <div>explorer</div>
          </div>
          <p class="caption">date range</p>
          <date-range></date-range>
          <nav>
            <div class="item active">${this.globe()}<div><span class="wide">map</span><span>overview</span></div></div>
            <div class="item">${this.chart()}<div><span class="snug">historical site</span><span class="snug">analyzer</span></div></div>
            <div class="item">${this.sheet()}<div><span class="loose">compound</span><span class="loose">lookup</span></div></div>
          </nav>
        </aside>
      </div>
      <main>
        <header>
          <div>
            <h1>Map Overview</h1>
            <h2>Summary View of Houston Air Monitoring Sites</h2>
          </div>
          <div class="filters">
            <div class="select"><div class="head">AIR MONITORING SITES${this.caret()}</div></div>
            <div class="select">
              <div class="head open">CHEMICAL COMPOUNDS${this.caret()}</div>
              <ul class="menu">
                ${compounds.map((c) => html`<li class=${classMap({ prefixed: c.includes("-") })}>${c}</li>`)}
              </ul>
            </div>
          </div>
        </header>
        <site-map></site-map>
      </main>
    `;
  }
}
